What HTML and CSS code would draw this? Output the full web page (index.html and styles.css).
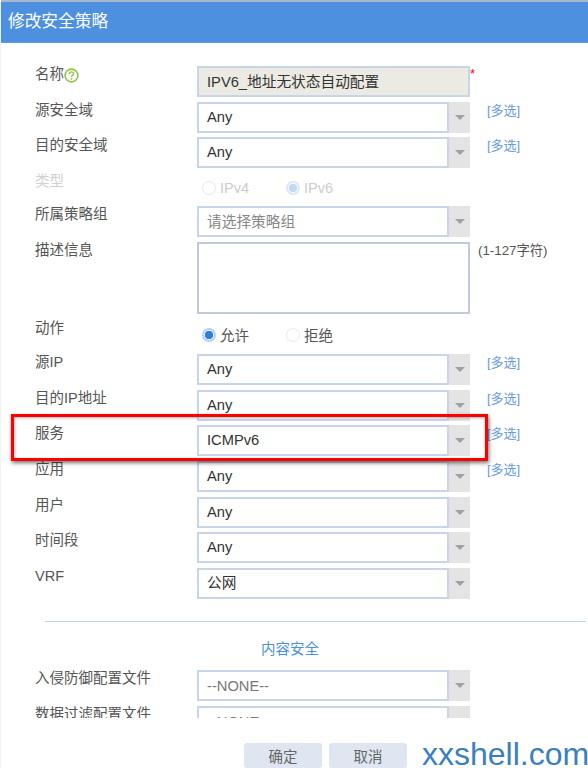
FILE: index.html
```html
<!DOCTYPE html>
<html lang="zh-CN">
<head>
    <meta charset="UTF-8">
    <meta name="viewport" content="width=device-width, initial-scale=1.0">
    <title>修改安全策略</title>
    <link rel="stylesheet" href="styles.css">
</head>
<body>
    <div class="dialog">
        <div class="title-bar">修改安全策略</div>

        <div class="form">
            <div class="row">
                <div class="label">名称<svg class="help" viewBox="0 0 15 15"><circle cx="7.5" cy="7.5" r="6.4" fill="#fff" stroke="#8cc63f" stroke-width="1.6"/><path d="M5.4 5.9c0-1.3 1-2 2.1-2s2.1.7 2.1 1.9c0 1.5-2.1 1.6-2.1 3.2" fill="none" stroke="#8cc63f" stroke-width="1.4"/><circle cx="7.5" cy="10.9" r=".9" fill="#8cc63f"/></svg></div>
                <div class="text-input readonly">IPV6_地址无状态自动配置</div>
                <span class="required">*</span>
            </div>
            <div class="row">
                <div class="label">源安全域</div>
                <div class="select"><div class="value">Any</div><div class="arrow"></div></div>
                <a class="more">[多选]</a>
            </div>
            <div class="row">
                <div class="label">目的安全域</div>
                <div class="select"><div class="value">Any</div><div class="arrow"></div></div>
                <a class="more">[多选]</a>
            </div>
            <div class="row row-type">
                <div class="label disabled">类型</div>
                <div class="radios disabled">
                    <span class="radio"><i class="dot"></i>IPv4</span>
                    <span class="radio"><i class="dot on"></i>IPv6</span>
                </div>
            </div>
            <div class="row">
                <div class="label">所属策略组</div>
                <div class="select"><div class="value placeholder">请选择策略组</div><div class="arrow"></div></div>
            </div>
            <div class="row row-desc">
                <div class="label">描述信息</div>
                <div class="textarea"></div>
                <span class="hint">(1-127字符)</span>
            </div>
            <div class="row row-action">
                <div class="label">动作</div>
                <div class="radios">
                    <span class="radio"><i class="dot on"></i>允许</span>
                    <span class="radio"><i class="dot"></i>拒绝</span>
                </div>
            </div>
            <div class="row">
                <div class="label">源IP</div>
                <div class="select"><div class="value">Any</div><div class="arrow"></div></div>
                <a class="more">[多选]</a>
            </div>
            <div class="row">
                <div class="label">目的IP地址</div>
                <div class="select"><div class="value">Any</div><div class="arrow"></div></div>
                <a class="more">[多选]</a>
            </div>
            <div class="row">
                <div class="label">服务</div>
                <div class="select"><div class="value">ICMPv6</div><div class="arrow"></div></div>
                <a class="more">[多选]</a>
            </div>
            <div class="row">
                <div class="label">应用</div>
                <div class="select"><div class="value">Any</div><div class="arrow"></div></div>
                <a class="more">[多选]</a>
            </div>
            <div class="row">
                <div class="label">用户</div>
                <div class="select"><div class="value">Any</div><div class="arrow"></div></div>
            </div>
            <div class="row">
                <div class="label">时间段</div>
                <div class="select"><div class="value">Any</div><div class="arrow"></div></div>
            </div>
            <div class="row">
                <div class="label">VRF</div>
                <div class="select"><div class="value">公网</div><div class="arrow"></div></div>
            </div>

            <div class="divider"></div>
            <div class="section-title">内容安全</div>

            <div class="row">
                <div class="label">入侵防御配置文件</div>
                <div class="select"><div class="value muted">--NONE--</div><div class="arrow"></div></div>
            </div>
            <div class="row">
                <div class="label">数据过滤配置文件</div>
                <div class="select"><div class="value muted">--NONE--</div><div class="arrow"></div></div>
            </div>
        </div>

        <div class="footer">
            <button class="btn">确定</button>
            <button class="btn">取消</button>
        </div>

        <div class="highlight"></div>
        <div class="watermark">xxshell.com</div>
    </div>
</body>
</html>
```

FILE: styles.css
```css
html, body {
    margin: 0;
    height: 100%;
    overflow: hidden;
    background-color: #fff;
}
body {
    font-family: "Liberation Sans", "Noto Sans CJK SC", sans-serif;
    font-size: 14.5px;
    color: #555;
}
.dialog {
    position: relative;
    height: 768px;
    overflow: hidden;
    border-left: 1px solid #eef3fb;
    box-sizing: border-box;
}
.title-bar {
    height: 40px;
    margin-left: -1px;
    line-height: 40px;
    padding-left: 8px;
    font-size: 16.7px;
    color: #fff;
    background-color: #4d90df;
    border-top: 2px solid #a9b9cc;
    border-bottom: 1px solid #5a9ae6;
}
.form {
    height: 675px;
    padding: 23px 0 0 34px;
    box-sizing: border-box;
    overflow: hidden;
}
.row {
    display: flex;
    align-items: flex-start;
    height: 35.6px;
}
.row-type {
    height: 33.6px;
}
.row-desc {
    height: 78px;
}
.row-action {
    height: 34.2px;
}
.label {
    display: flex;
    align-items: center;
    width: 162px;
    height: 18px;
    margin-top: -1px;
    line-height: 18px;
    flex-shrink: 0;
}
.label.disabled {
    color: #d0d0d0;
}
.help {
    width: 15px;
    height: 15px;
    margin-top: 2px;
}
.text-input, .select, .textarea {
    width: 273px;
    box-sizing: border-box;
}
.text-input {
    height: 31px;
    line-height: 28px;
    padding-left: 8px;
    font-size: 14.7px;
    color: #333;
    border: 2px solid #c8d5e9;
}
.readonly {
    background-color: #ebebe4;
}
.required {
    margin: 1px 0 0 0;
    color: #f00;
    font-size: 13px;
    line-height: 13px;
}
.select {
    display: flex;
    height: 31px;
}
.value {
    flex: 1;
    line-height: 27px;
    padding-left: 8px;
    font-size: 14.7px;
    color: #333;
    border: 2px solid #c8d5e9;
    overflow: hidden;
}
.value.placeholder {
    color: #888;
    line-height: 28px;
}
.value.muted {
    color: #777;
    line-height: 28px;
}
.arrow {
    display: flex;
    align-items: center;
    justify-content: center;
    width: 21px;
    background-color: #e4e4e4;
}
.arrow::after {
    content: "";
    border-top: 5px solid #a0a0a0;
    border-left: 5px solid transparent;
    border-right: 5px solid transparent;
}
.more {
    margin-left: 17px;
    line-height: 18px;
    font-size: 13px;
    color: #6a9ae0;
}
.hint {
    margin-left: 8px;
    line-height: 18px;
    font-size: 13.3px;
    color: #555;
}
.textarea {
    height: 72px;
    border: 2px solid #c3c9dc;
}
.radios {
    display: flex;
    padding-top: 6px;
}
.radio {
    display: flex;
    align-items: center;
    width: 84px;
    height: 18px;
    margin-left: 5px;
    margin-right: -5px;
}
.dot {
    width: 14px;
    height: 14px;
    margin-right: 4px;
    box-sizing: border-box;
    border: 1px solid #e8e8e8;
    border-radius: 50%;
}
.dot.on {
    border: 2px solid #b6d0f2;
    background: radial-gradient(circle, #2f7fe0 0 4px, #fff 4.5px);
}
.radios.disabled {
    color: #ccc;
}
.radios.disabled .dot.on {
    border-color: #dce8f8;
    background: radial-gradient(circle, #c2d8f5 0 4px, #fff 4.5px);
}
.divider {
    height: 1px;
    margin: 18px 2px 0 10px;
    background-color: #bfd2ec;
}
.section-title {
    height: 48px;
    line-height: 54px;
    padding-left: 226px;
    color: #4a90e2;
}
.footer {
    display: flex;
    gap: 7px;
    padding: 25px 0 0 243px;
}
.btn {
    width: 78px;
    height: 25px;
    padding: 0;
    font-family: inherit;
    font-size: 14.5px;
    color: #666;
    background-color: #dfe5f1;
    border: none;
    border-radius: 3px;
}
.highlight {
    position: absolute;
    left: 10px;
    top: 414px;
    width: 477px;
    height: 47px;
    box-sizing: border-box;
    border: 3px solid #f00;
    box-shadow: 1px 2px 4px rgba(0, 0, 0, .55), inset 1px 1px 3px rgba(0, 0, 0, .3);
}
.watermark {
    position: absolute;
    left: 421px;
    top: 741px;
    font-size: 32px;
    line-height: 27px;
    color: #3a80c0;
    white-space: nowrap;
}
```
